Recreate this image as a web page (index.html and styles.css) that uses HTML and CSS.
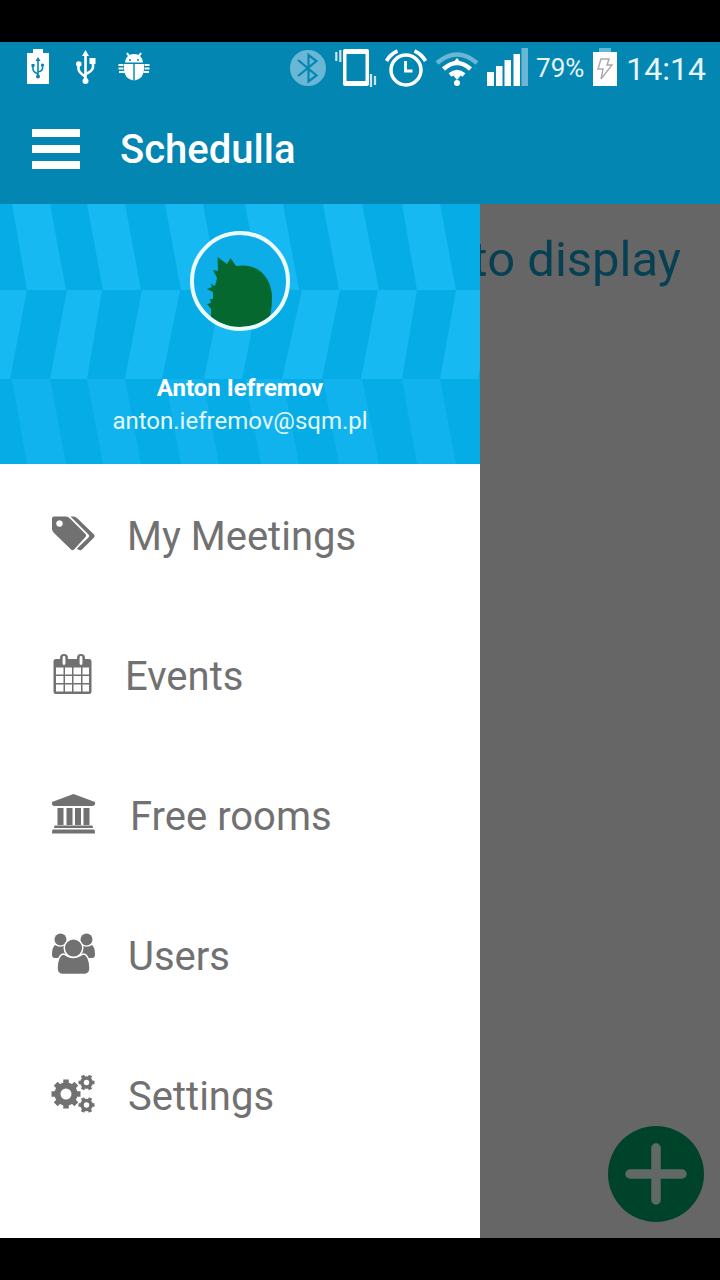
FILE: index.html
```html
<!DOCTYPE html>
<html lang="en">
<head>
<meta charset="utf-8">
<meta name="viewport" content="width=device-width, initial-scale=1">
<title>Schedulla</title>
<link rel="stylesheet" href="styles.css">
</head>
<body>
<div class="screen">
  <header class="top">
    <div class="status">
      <div class="notices">
        <svg width="22" height="40" viewBox="27 48 22 40"><path d="M27 53h6v-4h10v4h6v31H27z" fill="#fff"/><g fill="none" stroke="#0486b3" stroke-width="1.6"><path d="M38 60v16M33 66v3q0 3 5 5M42.500 65v3q0 3-4.500 4"/></g><g fill="#0486b3"><path d="M38 57l2.500 4h-5zM31.500 64h3v3h-3z"/><circle cx="42.500" cy="65" r="1.600"/><circle cx="38" cy="76.500" r="2"/></g></svg>
        <svg width="23" height="40" viewBox="72 48 23 40"><g fill="none" stroke="#fff" stroke-width="2.600"><path d="M85.500 55v27M78.500 65v4q0 3 7 8M93 62v5q0 4-7.500 7"/></g><g fill="#fff"><path d="M85.500 50l3.500 6h-7zM89.500 58h6v6h-6z"/><circle cx="78.800" cy="64" r="2.800"/><circle cx="85.500" cy="81" r="3"/></g></svg>
        <svg width="32" height="40" viewBox="118 48 32 40"><g fill="#fff"><path d="M125 62.500q1-8.500 9-8.500t9 8.500z"/><path d="M124 64h9.300v16.500q-9.300-2-9.300-11.500zM134.700 64h9.300v5q0 9.500-9.300 11.500z"/></g><path d="M127 53l2 3M141 53l-2 3M118.500 65h5M118.500 68.500h5M119 72h5.500M144.500 65h5M144.500 68.500h5M143.500 72h5.500" stroke="#fff" stroke-width="2"/><circle cx="130" cy="60" r="1" fill="#0486b3"/><circle cx="138" cy="60" r="1" fill="#0486b3"/></svg>
      </div>
      <div class="signals">
        <svg width="38" height="40" viewBox="290 48 38 40"><circle cx="309" cy="68" r="18" fill="#6ab6d5"/><path d="M299 60l18.500 15.500-8 6V55l8 6L299 76" fill="none" stroke="#0486b3" stroke-width="2.200"/></svg>
        <svg width="42" height="40" viewBox="339 48 42 40"><path fill="#fff" fill-rule="evenodd" d="M349 49h22q2 0 2 2v33q0 2-2 2h-22q-2 0-2-2V51q0-2 2-2zm1.500 5v27h19V54z"/><path d="M340.300 52v9M344.300 50v12M375 74v13M379 76v9" stroke="#c9e6f0" stroke-width="2.200"/></svg>
        <svg width="42" height="40" viewBox="388 48 42 40"><g fill="none" stroke="#fff"><circle cx="409" cy="70" r="15" stroke-width="3.500"/><path d="M408.500 61v10h7" stroke-width="2.800"/><path d="M389.500 61q4-7 11-10M428.500 61q-4-7-11-10" stroke-width="3.600"/></g></svg>
        <svg width="44" height="40" viewBox="437 48 44 40"><g fill="none"><path d="M439 63q20-17 40 0" stroke="#6ab6d5" stroke-width="4.500"/><path d="M445.500 69q13.500-12 27 0M452 75q7-6 14 0" stroke="#fff" stroke-width="4.500"/></g><g fill="#fff"><path d="M459 58l5 6h-10zM459 80l5-6h-10z"/><circle cx="459" cy="83" r="3"/></g></svg>
        <svg width="41" height="40" viewBox="488 48 41 40"><path fill="#fff" d="M488 72h7v14h-7zM497 66h6.500v20H497zM505.500 60h6.500v26h-6.500zM514.500 54h6.500v32h-6.500z"/><path fill="#6ab6d5" d="M522.500 48h6.500v38h-6.500z"/></svg>
        <span class="percent">79%</span>
        <svg width="26" height="40" viewBox="591 48 26 40"><path fill="#6ab6d5" d="M598 48h12v4h-12z"/><path fill="#fff" d="M592 52h24v34h-24z"/><path d="M600 59h8l-2 6h5l-11 14 2-10h-5z" fill="none" stroke="#a9a9a9" stroke-width="1.400"/></svg>
        <span class="clock">14:14</span>
      </div>
    </div>
    <div class="appbar">
      <button class="burger" type="button" aria-label="Menu"><span></span><span></span><span></span></button>
      <h1>Schedulla</h1>
    </div>
  </header>

  <div class="body">
    <main class="page">
      <p class="empty">to display</p>
      <button class="add" type="button" aria-label="Add"><svg width="96" height="96" viewBox="0 0 96 96"><path d="M48 22v52M22 48h52" stroke="#606965" stroke-width="9.500" stroke-linecap="round"/></svg></button>
    </main>
    <aside class="drawer">
      <div class="profile">
        <svg class="pattern" viewBox="0 204 480 260" preserveAspectRatio="none" aria-hidden="true">
          <g fill="#17b9f3">
            <path d="M12 204h38l16 86H27zM87 204h38l16 86h-38zM165 204h38l16 86h-38zM245 204h38l16 86h-38zM323 204h39l17 86h-40zM402 204h38l16 86h-39z"/>
            <path d="M-12 290h39l-17 89h-38zM67 290h35l-15 89H50zM142 290h38l-18 89h-37zM222 290h38l-18 89h-38zM302 290h38l-18 89h-40zM378 290h39l-15 89h-41zM456 290h38l-16 89h-38z"/>
          </g>
          <path fill="#11b3ee" d="M12 379h38l16 85H27zM87 379h38l16 85h-38zM165 379h38l16 85h-38zM245 379h38l16 85h-38zM323 379h39l17 85h-40zM402 379h38l16 85h-39z"/>
        </svg>
        <svg class="avatar" width="100" height="100" viewBox="190 231 100 100" role="img" aria-label="Anton Iefremov">
          <clipPath id="disc"><circle cx="240" cy="281" r="46"/></clipPath>
          <circle cx="240" cy="281" r="48" fill="#0dade7"/>
          <path clip-path="url(#disc)" fill="#05692f" d="M211 331V309L207 304L211 303L210 299L213 299V292L207 289L212 287L211 284L215 286L217 278L213 270L218 271L217.500 257L227 264L230.500 258L236 266C260 262 272 280 272 298Q272 318 264 331z"/>
          <circle cx="240" cy="281" r="48" fill="none" stroke="#effcff" stroke-width="4"/>
        </svg>
        <strong class="name">Anton Iefremov</strong>
        <span class="mail">anton.iefremov@sqm.pl</span>
      </div>
      <nav class="menu">
        <a href="#meetings"><svg width="43" height="44" viewBox="52 513 43 44"><g fill="#717171"><path fill-rule="evenodd" d="M54 516.500h12q2 0 4 2l15.500 15.500q1.500 1.500 0 3L74 549.500q-1.500 1.500-3 0L54 533q-2-2-2-4v-10.500q0-2 2-2zm5.500 3.700a3.300 3.300 0 1 0 .01 0z"/><path d="M70.500 516.500h3q2 0 4 2L94 534.500q1.500 1.500 0 3L82 549.500q-1.500 1.500-4 0l-1-1 11.500-11q1.500-1.500 0-3z"/></g></svg><span>My Meetings</span></a>
        <a href="#events"><svg width="41" height="44" viewBox="52 653 41 44"><path fill="#717171" fill-rule="evenodd" d="M56 659h4v-1q0-4 4-4t4 4v1h9v-1q0-4 4-4t4 4v1h4q2.500 0 2.500 2.500v30q0 2.500-2.500 2.500H56q-2.500 0-2.500-2.500v-30Q53.500 659 56 659zm0 8.500v7h7.500v-7zm9 0v7h7v-7zm8.500 0v7h7.500v-7zm9 0v7H89v-7zM56 676v7h7.500v-7zm9 0v7h7v-7zm8.500 0v7h7.500v-7zm9 0v7H89v-7zM56 684.500v7h7.500v-7zm9 0v7h7v-7zm8.500 0v7h7.500v-7zm9 0v7H89v-7z"/><path d="M64 657.500v6M81 657.500v6" stroke="#fff" stroke-width="2.800" stroke-linecap="round"/></svg><span>Events</span></a>
        <a href="#rooms"><svg width="46" height="44" viewBox="52 793 46 44"><g fill="#717171"><path d="M73.500 794L95 802v2.500q-1 1.500-3 1.500H55q-2 0-3-1.500V802zM57.500 808h6v17h-6zM66.500 808h6v17h-6zM75 808h6v17h-6zM83.500 808h6v17h-6zM55 825.500h37q1 0 1 2.500H54q0-2.500 1-2.500zM53 829.500h41q1 0 1 4H52q0-4 1-4z"/></g></svg><span>Free rooms</span></a>
        <a href="#users"><svg width="44" height="44" viewBox="52 933 44 44"><g fill="#717171"><circle cx="60.500" cy="939.500" r="6"/><circle cx="86.500" cy="939.500" r="6"/><path d="M55 945q5 3.500 11 0v13H55q-3 0-3-3.500 0-7 3-9.500zM92 945q-5 3.500-11 0v13h11q3 0 3-3.500 0-7-3-9.500z"/><g stroke="#fff" stroke-width="1.500"><path d="M64 954q9 7 19 0c5 0 7 8 7 14q0 6.500-6 6.500H63q-6 0-6-6.500c0-6 2-14 7-14z"/><circle cx="73.500" cy="948" r="9.300"/></g></g></svg><span>Users</span></a>
        <a href="#settings"><svg width="44" height="44" viewBox="52 1073 44 44"><g fill="none" stroke="#717171"><circle cx="66" cy="1094" r="8.500" stroke-width="6"/><path d="M66 1079.500v5M66 1103.500v5M51.500 1094h5M75.500 1094h5M55.700 1083.700l4 4M72.300 1100.300l4 4M76.300 1083.700l-4 4M59.700 1100.300l-4 4" stroke-width="5.500"/><g id="cog"><circle cx="86.500" cy="1082.500" r="4.500" stroke-width="3.600"/><path d="M78.500 1082.500h3M91.500 1082.500h3M82.500 1075.500l1.500 3M90.500 1075.500l-1.500 3M82.500 1089.500l1.500-3M90.500 1089.500l-1.500-3" stroke-width="3.600"/></g><use href="#cog" y="22.500"/></g></svg><span>Settings</span></a>
      </nav>
    </aside>
  </div>
</div>
</body>
</html>
```
FILE: styles.css
```css
* { box-sizing: border-box; }
body {
  margin: 0;
  background: #000;
  font-family: Roboto, "Noto Sans", sans-serif;
}
svg { display: block; flex: none; overflow: visible; }
button { border: 0; padding: 0; cursor: pointer; }
.screen {
  display: flex;
  flex-direction: column;
  min-height: 100vh;
  padding: 42px 0;
}
.top { background: #0486b3; color: #fff; }
.status {
  display: flex;
  justify-content: space-between;
  align-items: center;
  height: 52px;
  padding: 0 14px 0 27px;
}
.notices { display: flex; align-items: center; gap: 23px; }
.signals { display: flex; align-items: center; gap: 8px; }
.percent { font-size: 26px; line-height: 40px; color: #e4f5fb; }
.clock { padding-top: 2px; font-size: 32px; line-height: 40px; color: #e4f5fb; }
.appbar {
  display: flex;
  align-items: center;
  gap: 40px;
  height: 110px;
  padding: 0 32px;
}
.burger {
  display: flex;
  flex-direction: column;
  gap: 8px;
  width: 48px;
  background: none;
}
.burger span { height: 8px; width: 100%; background: #fff; }
h1 { margin: 0; padding-top: 2px; font-size: 40px; line-height: 48px; font-weight: 500; }

.body { flex: 1; display: grid; grid-template-columns: 2fr 1fr; }
.page {
  grid-area: 1 / 1 / 2 / 3;
  display: flex;
  flex-direction: column;
  justify-content: space-between;
  align-items: flex-end;
  padding: 26px 16px 16px;
  background: #666;
}
.empty {
  margin: 0;
  padding-right: 23px;
  font-size: 49px;
  line-height: 60px;
  color: #073f53;
}
.add {
  width: 96px;
  height: 96px;
  border-radius: 50%;
  background: #00432b;
}
.drawer { grid-area: 1 / 1 / 2 / 2; z-index: 1; background: #fff; }
.profile {
  position: relative;
  display: flex;
  flex-direction: column;
  align-items: center;
  height: 260px;
  padding-top: 27px;
  background: #06ace6;
  color: #fff;
}
.pattern { position: absolute; inset: 0; width: 100%; height: 100%; overflow: hidden; }
.avatar, .name, .mail { position: relative; }
.name { margin-top: 41px; font-size: 24px; line-height: 32px; font-weight: 700; }
.mail { font-size: 24px; line-height: 34px; color: #e4f8ff; }
.menu { display: flex; flex-direction: column; }
.menu a {
  display: flex;
  align-items: center;
  gap: 32px;
  height: 140px;
  padding: 2px 0 0 52px;
  font-size: 40px;
  line-height: 48px;
  color: #717171;
  text-decoration: none;
}
.menu span { padding-top: 4px; }
```
